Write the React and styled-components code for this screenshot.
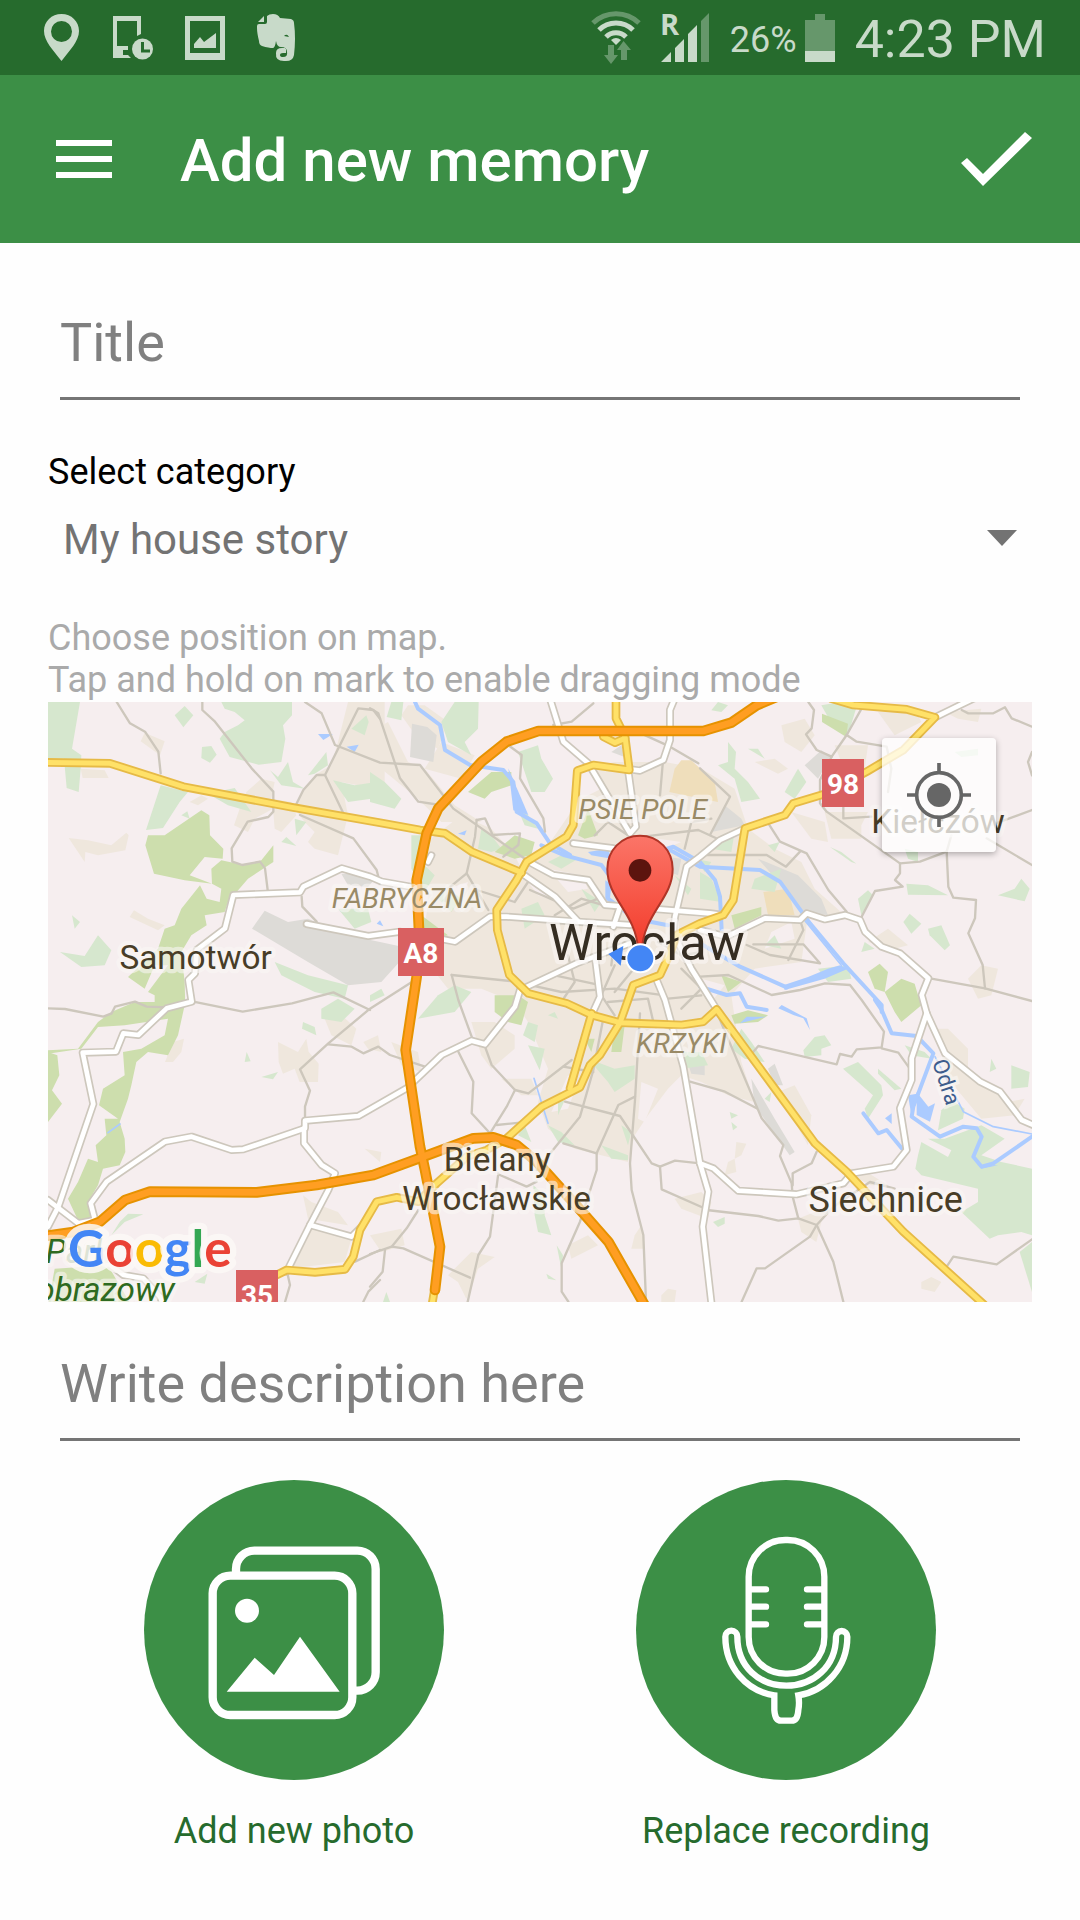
import React, { useState } from "react";
import styled, { createGlobalStyle } from "styled-components";

const GlobalStyle = createGlobalStyle`
  * {
    box-sizing: border-box;
  }
  body {
    margin: 0;
    background: #fefefe;
    font-family: Roboto, "Noto Sans", sans-serif;
  }
`;

const StatusBar = styled.div`
  display: flex;
  justify-content: space-between;
  align-items: center;
  height: 75px;
  padding: 0 34px 0 44px;
  background: #266b2d;
  color: #c8dac9;
`;

const StatusGroup = styled.div`
  display: flex;
  align-items: center;
  gap: ${(props) => props.$gap}px;

  svg {
    display: block;
    overflow: visible;
  }
`;

const Battery = styled.span`
  display: flex;
  align-items: center;
  gap: 8px;
  font-size: 36px;
  line-height: 42px;
`;

const Percent = styled.span`
  padding-top: 4px;
`;

const Clock = styled.span`
  padding-top: 4px;
  font-size: 52px;
  line-height: 64px;
`;

const AppBar = styled.header`
  display: flex;
  align-items: center;
  height: 168px;
  padding: 0 48px 0 56px;
  background: #3c8f46;
  color: #fff;
`;

const AppTitle = styled.h1`
  flex: 1;
  margin: 0 0 0 68px;
  padding-top: 4px;
  font-size: 60px;
  font-weight: 500;
  line-height: 70px;
`;

const IconButton = styled.button`
  display: block;
  padding: 0;
  border: 0;
  background: none;
  color: inherit;
  cursor: pointer;

  svg {
    display: block;
  }
`;

const Form = styled.form`
  display: flex;
  flex-direction: column;
  padding: 67px 48px 48px;
`;

const TextField = styled.input`
  margin: 0 12px;
  padding: 0 0 23px;
  height: 90px;
  border: 0;
  border-bottom: 3px solid #757575;
  border-radius: 0;
  outline: none;
  background: none;
  color: #212121;
  font-family: inherit;
  font-size: 54px;
  line-height: 64px;

  &::placeholder {
    color: #808080;
    opacity: 1;
  }
`;

const Label = styled.label`
  margin-top: 51px;
  color: #000;
  font-size: 36px;
  line-height: 42px;
`;

const SelectBox = styled.div`
  display: grid;
  align-items: center;
  margin: 22px 12px 52px;

  > * {
    grid-area: 1 / 1;
  }

  svg {
    justify-self: end;
    margin: 0 3px 4px 0;
    pointer-events: none;
  }
`;

const Select = styled.select`
  appearance: none;
  width: 100%;
  padding: 0 0 0 3px;
  border: 0;
  background: none;
  color: #737373;
  font-family: inherit;
  font-size: 42px;
  line-height: 50px;
`;

const Hint = styled.p`
  margin: 0 0 1px;
  color: #aaa;
  font-size: 36px;
  line-height: 42px;
`;

const MapBox = styled.div`
  position: relative;
  height: 600px;
  margin-bottom: 49px;
  overflow: hidden;
  background: #f6eeef;
`;

const MapSvg = styled.svg`
  display: block;
  width: 100%;
  height: 100%;
  font-family: Roboto, "Noto Sans", sans-serif;
`;

const LocateButton = styled(IconButton)`
  position: absolute;
  top: 36px;
  right: 36px;
  width: 114px;
  height: 114px;
  border-radius: 4px;
  background: rgba(255, 255, 255, 0.75);
  box-shadow: 0 2px 6px rgba(0, 0, 0, 0.3);
`;

const Actions = styled.div`
  display: grid;
  grid-template-columns: 1fr 1fr;
  margin-top: 39px;
`;

const Action = styled(IconButton)`
  display: flex;
  flex-direction: column;
  align-items: center;
  gap: 30px;
  color: #266b2d;
  font-family: inherit;
  font-size: 36px;
  line-height: 42px;
`;

const Circle = styled.span`
  width: 300px;
  height: 300px;
  border-radius: 50%;
  background: #3c8f46;
`;

/* ---- map data, in map units (3 per pixel) ---- */

const towns = [
  "1136,420 1240,340 1330,380 1400,460 1420,500 1500,430 1590,300 1600,200 1700,180 1850,180 1960,200 2060,260 2100,380 2180,440 2260,480 2300,560 2390,640 2280,640 2260,780 2120,800 2050,880 2080,1080 2120,1200 2040,1180 1960,1140 1900,1120 1860,1160 1800,1240 1760,1300 1740,1380 1660,1360 1580,1340 1500,1280 1470,1200 1500,1100 1440,960 1400,900 1300,860 1200,860 1120,760 1140,600",
  "966,90 1020,60 1080,180 1130,200 1220,310 1300,360 1180,360 1110,290 1000,200",
  "900,0 1010,0 1010,270 960,280 930,250 880,240 900,340 885,400 870,460 800,440 780,420 800,390 770,360 740,320 770,260 800,220 850,190 870,120",
  "1130,10 1200,60 1170,140 1110,110 1060,40 1080,10",
  "1180,120 1280,160 1240,230 1130,200",
  "278,118 290,92 350,118 336,160",
  "98,200 170,205 182,228 104,228",
  "62,408 120,415 190,430 235,392 242,400 232,445 150,460 112,450 110,480",
  "595,270 640,230 680,240 670,290 730,300 745,340 700,390 680,380 675,320 620,350 600,390 558,370 575,320",
  "425,300 460,280 480,290 450,310",
  "245,645 258,625 300,650 350,670 330,685",
  "351,1080 375,1020 408,1010 400,1050 375,1080",
  "690,1020 750,1050 775,1010 782,1050 812,1085 810,1140 755,1140 740,1100 705,1115 692,1080",
  "830,950 870,930 925,980 910,1030 850,1000",
  "946,1020 990,1000 1000,1050 960,1040",
  "765,1480 790,1500 870,1530 900,1570 780,1550",
  "790,1570 910,1610 890,1680 720,1700",
  "950,1340 1000,1350 996,1380",
  "966,1600 1060,1580 1070,1630 1000,1650",
  "1200,1720 1270,1650 1340,1665 1290,1700 1270,1760 1255,1790 1230,1740",
  "1030,1020 1110,1050 1120,1110 1060,1090",
  "1270,960 1340,960 1400,1000 1400,1040 1330,1100 1300,1060",
  "1360,1130 1450,1130 1470,1180 1420,1180",
  "1880,1490 1960,1470 1990,1500 1980,1550 1900,1520",
  "1560,1630 1620,1600 1650,1630 1570,1670",
  "1760,1600 1780,1570 1790,1640 1750,1640",
  "1840,1780 1860,1760 1885,1765 1880,1800 1840,1800",
  "2200,70 2270,50 2300,100 2260,150 2210,120",
  "2360,130 2460,130 2450,200 2400,210 2380,180",
  "2330,330 2460,330 2440,370 2440,410 2350,410",
  "2230,330 2330,360 2340,420 2290,410",
  "2120,180 2180,170 2220,200 2190,215",
  "2460,720 2520,680 2580,730 2540,740",
  "2760,830 2800,790 2850,800 2830,880 2790,890",
  "2660,980 2700,980 2760,1040 2760,1100 2880,1200 2930,1190 2900,1240 2800,1250 2700,1130",
  "2190,1170 2240,1150 2290,1240 2280,1330 2240,1260",
  "2250,1550 2350,1510 2320,1560 2305,1620 2260,1590",
  "2370,1400 2440,1400 2520,1450 2470,1450",
  "2620,1740 2650,1725 2680,1740 2660,1770 2620,1760",
  "2040,1380 2060,1370 2065,1410 2030,1420",
  "2065,1320 2095,1325 2080,1360 2060,1370",
  "2490,30 2600,20 2620,60 2540,100",
  "2690,30 2800,20 2790,60 2730,50",
];

const fields = [
  "1590,210 1640,190 1660,260 1600,290",
  "1500,500 1600,520 1620,560 1560,570",
  "1440,540 1500,560 1500,590 1470,580",
  "1200,560 1260,540 1240,610",
  "1780,1140 1830,1160 1790,1260 1770,1250",
  "1560,1120 1590,1140 1560,1220 1510,1230",
  "2170,690 2230,660 2240,710 2150,740",
  "1960,830 2030,850 1990,900",
  "1830,410 1900,420 1850,440",
];

const woods = [
  "0,0 96,0 72,140 100,160 98,200 92,270 56,258 48,170 0,170",
  "380,40 410,12 436,40 406,76",
  "520,0 732,0 732,40 705,70 712,110 700,180 632,188 545,165 515,110 530,90 570,70 590,55 560,30 530,20",
  "462,135 490,132 506,158 486,182 460,168",
  "338,250 420,270 395,300 345,378 294,384",
  "480,275 560,258 610,330 540,310",
  "666,205 690,225 720,180 735,240 770,260 700,250",
  "780,220 835,150 840,190 800,215",
  "36,750 110,762 150,700 190,745 170,790 100,795",
  "72,640 96,660 80,680",
  "400,340 418,328 425,350",
  "855,235 920,250 985,240 970,290 900,300",
  "740,350 775,360 745,400",
  "700,420 715,405 745,432",
  "910,80 955,40 962,60 950,100",
  "870,620 960,620 970,660 920,680",
  "680,780 780,820 900,850 890,890 800,870 700,820",
  "820,920 870,890 920,920 880,960 820,950",
  "765,960 800,975 805,1000 762,980",
  "590,1080 596,1050 608,1078",
  "640,1125 690,1110 675,1132",
  "215,1560 240,1535 286,1537 230,1560 190,1600",
  "440,1740 478,1715 470,1745",
  "1030,0 1066,0 1060,55 1016,45",
  "1180,60 1220,0 1292,0 1290,80 1250,120 1270,160 1200,120",
  "966,210 1010,240 1060,290 1040,320 966,300",
  "1410,150 1470,130 1480,170 1515,230 1490,270 1450,270",
  "1090,400 1130,400 1120,480 1160,520 1130,570 1090,500",
  "1300,380 1330,400 1360,440 1330,450 1290,440",
  "1400,300 1440,340 1470,380 1430,370",
  "1170,590 1200,560 1240,590 1210,630",
  "1420,620 1470,600 1490,640 1430,680",
  "1170,880 1220,850 1270,870 1220,930 1110,950",
  "966,880 1000,860 1010,880 966,900",
  "1500,480 1560,450 1590,470 1540,500",
  "1600,560 1660,600 1640,630",
  "1880,520 1930,560 1920,580",
  "1940,470 1990,480 1970,510",
  "1800,560 1840,540 1850,590",
  "1440,960 1470,970 1460,1020 1425,1000",
  "1440,1030 1490,1040 1475,1105",
  "1500,940 1520,930 1530,950",
  "1620,1070 1700,1100 1760,1090 1760,1130 1700,1170 1680,1140",
  "1430,1270 1450,1320 1410,1300",
  "1500,1270 1540,1290 1580,1330 1530,1320",
  "1530,1200 1550,1195 1530,1240",
  "1660,1330 1740,1360 1740,1375 1690,1370",
  "1720,1270 1750,1290 1740,1330",
  "1456,1450 1490,1480 1490,1540 1510,1600 1470,1590 1460,1540",
  "1526,1630 1545,1660 1540,1700",
  "1495,1715 1525,1735 1500,1730",
  "1005,1800 1015,1770 1026,1800",
  "1880,1050 1960,1050 1980,1090 1900,1100",
  "2080,980 2110,1020 2150,1080 2090,1070 2050,1040",
  "2010,0 2040,10 2020,30 1990,25",
  "2320,10 2380,0 2430,0 2400,100 2360,80",
  "2040,120 2064,150 2060,200 2100,240 2136,290 2080,300 2060,230 2010,190 2040,180",
  "2100,140 2130,140 2150,170",
  "2210,270 2250,200 2275,240 2240,290",
  "2020,400 2060,390 2050,450 1990,440",
  "2160,430 2195,420 2180,450",
  "2120,530 2200,500 2180,570 2110,560",
  "2346,435 2380,450 2425,485 2410,480",
  "2570,440 2610,450 2610,480 2580,470",
  "2430,590 2460,565 2475,580 2440,640",
  "2575,545 2640,550 2700,580 2580,578",
  "2566,660 2585,635 2620,665 2590,695",
  "2640,680 2680,670 2706,730 2690,745 2645,700",
  "2440,750 2450,720 2480,740",
  "2720,150 2790,140 2790,160 2740,165",
  "2850,580 2900,560 2920,530 2945,560 2930,598",
  "1956,510 1990,530 2020,600 1956,590",
  "2150,730 2180,700 2200,740",
  "2310,800 2400,790 2410,830 2340,840",
  "2266,1045 2300,1005 2330,1000 2350,1030 2320,1040 2320,1060 2270,1065",
  "2385,1100 2430,1080 2500,1150 2505,1180 2460,1250 2450,1220 2475,1180",
  "2490,1100 2560,1160 2540,1165 2490,1115",
  "2570,1030 2630,1050 2650,1070 2590,1060",
  "2680,1225 2710,1195 2750,1220 2745,1250 2670,1285",
  "2610,1360 2620,1320 2700,1365 2710,1345 2640,1310 2690,1310 2800,1270 2870,1310 2800,1360 2860,1380 2952,1400 2952,1600 2920,1590 2850,1600 2825,1610 2740,1530 2790,1500 2790,1460 2620,1420 2602,1400",
  "2890,1090 2945,1110 2940,1155 2890,1160",
  "2830,1070 2845,1100 2825,1110",
  "2915,1650 2952,1620 2952,1770",
  "1995,1560 2030,1545 2030,1565 2010,1575",
  "2045,1230 2070,1240 2050,1250",
  "2050,1260 2068,1275 2055,1285",
  "2150,1190 2170,1170 2165,1200",
];

const parks = [
  "292,430 300,400 350,400 460,325 484,340 486,400 526,440 524,470 470,465 425,520 492,545 410,535 318,515",
  "492,545 490,500 520,475 590,490 640,475 676,430 676,480 600,530 540,600 530,630 470,640 476,670 430,700 400,750 410,840 412,916 320,916 320,880 300,870 360,790 320,790 290,860 240,825 330,740 350,680 380,670 400,620 456,550 476,590 515,600 520,560",
  "190,930 260,900 340,900 410,910 390,1000 360,1060 300,1050 265,1080 250,1150 240,1190 215,1260 230,1310 232,1350 215,1390 165,1400 150,1450 120,1500 130,1550 90,1555 60,1490 90,1440 120,1370 150,1380 143,1330 175,1300 170,1250 210,1250 153,1210 165,1160 230,1120 225,1050 280,1040 350,1000 360,950 230,970 150,975 100,1040 0,1055 0,1045 90,1040 150,960",
  "0,1050 28,1060 34,1120 12,1165 42,1205 0,1260",
  "20,1700 180,1690 250,1810 0,1810",
  "1260,270 1330,210 1390,210 1390,250 1330,270 1310,290",
  "1340,450 1400,400 1460,420 1450,460 1400,470",
  "1590,400 1620,320 1650,400 1610,410",
  "1120,640 1200,700 1150,710 1120,690",
  "1340,880 1410,880 1440,900 1420,970 1380,960 1340,930",
  "1700,970 1730,970 1720,1050 1690,1050",
  "1610,1010 1640,1010 1630,1050",
  "2322,35 2400,65 2395,105 2322,60",
  "2050,640 2140,615 2140,640 2060,680",
  "2460,810 2495,785 2520,810 2510,870 2480,860",
  "2510,870 2560,830 2600,845 2610,880 2620,910 2560,960 2540,930",
  "2050,940 2100,925 2160,940 2130,960 2060,965",
  "2020,820 2080,840 2040,870",
];

const greys = [
  "1092,65 1138,75 1166,100 1156,180 1086,165",
  "612,680 650,626 720,660 780,650 900,700 996,720 1090,740 1000,840 900,850 780,780",
  "966,720 1050,740 1050,780 966,820",
  "880,515 990,520 960,555 900,550",
  "2130,470 2250,520 2320,590 2340,640 2260,630 2200,550",
  "2270,190 2320,145 2350,165 2310,230",
  "2030,310 2080,350 2090,370 1990,390",
  "2110,1130 2180,1250 2240,1350 2225,1360 2120,1210",
  "2160,1100 2180,1085 2205,1150 2180,1150",
  "1820,460 1900,470 1890,520 1840,500",
  "1920,1085 1970,1070 1970,1120 1930,1115",
  "1690,150 1720,130 1730,165",
];

const sands = [
  "1864,270 1880,200 1900,175 1930,175 2000,240 2010,300 1960,290",
  "2146,570 2220,560 2240,640 2160,640",
];

const lakes = [
  "1381,199 1396,234 1441,339 1396,325",
  "2606,1170 2641,1214 2661,1204 2646,1259 2606,1239",
  "2511,1249 2531,1234 2531,1266",
  "2191,919 2201,909 2276,949 2286,984 2266,949 2236,939",
  "2076,964 2156,944 2096,944",
  "2206,850 2280,825 2340,800 2376,790 2400,800 2330,830 2210,864",
  "810,96 855,96 826,114",
  "896,134 932,128 920,150",
  "1230,395 1256,385 1250,400",
  "986,665 996,655 1006,673",
  "1620,450 1680,440 1690,470 1630,460",
  "1672,535 1692,550 1672,600",
  "2580,1180 2616,1174 2590,1240",
  "2776,1360 2790,1390 2850,1390 2800,1400",
];

const rivers = [
  "1101,0 1110,20 1176,69 1191,144 1266,189 1366,204 1396,240 1406,329 1466,364 1506,424 1566,459",
  "1480,430 1550,460 1660,489 1686,524 1680,590 1760,650 1860,670",
  "1846,444 1876,434 1956,480 2001,534 2016,584 2021,684",
  "1866,444 1956,494 2136,504 2196,539 2286,664 2386,784 2501,909 2501,930",
  "1956,724 2076,794 2216,856",
  "1956,854 2036,879 2076,874 2096,914 2156,924",
  "2481,894 2501,924 2531,994 2606,1002 2656,1054 2596,1214 2591,1244 2676,1304 2746,1274 2786,1279 2801,1304 2776,1364 2801,1394 2836,1384 2952,1304",
  "2446,1234 2491,1294 2516,1284 2561,1339",
];

const streams = ["2661,1064 2746,1229 2836,1274 2952,1296", "1458,1129 1480,1200 1500,1264", "180,1292 216,1266", "2266,650 2380,790"];

const lanes = [
  "206,0 246,64 291,89 331,149 338,214",
  "463,0 463,24 501,59 611,199 676,269 676,329 661,345 599,359 551,439 553,479 583,489 636,479 651,499 659,564",
  "771,0 821,34 861,129 996,182 1116,189 1216,320 1436,474",
  "996,50 976,24 931,19 831,219 806,219 766,264 741,314",
  "831,219 886,334",
  "756,339 916,409 986,504 991,524",
  "761,584 763,614 806,659",
  "0,919 51,921 166,944 191,934 201,914 261,899 296,914 361,916",
  "436,899 584,929 732,904 856,871 966,924",
  "1101,834 966,920 841,1024 756,1102 786,1166 771,1214 771,1256",
  "841,1027 911,1034 946,1054 991,1034 1026,1059 1131,1094",
  "716,1704 726,1749 711,1800",
  "996,1644 921,1679",
  "996,1734 961,1769 946,1799",
  "1111,1524 1076,1579 1031,1634 966,1656",
  "1031,1634 1066,1639 1266,1727",
  "1011,1644 1004,1709 966,1754",
  "1351,1414 1326,1604 1291,1659 1259,1799",
  "1356,1419 1436,1454 1466,1439",
  "1211,819 1231,894 1271,1004",
  "1211,819 1406,839",
  "1231,1049 1276,1139 1271,1234 1326,1294",
  "1311,1034 1331,1089 1401,1164 1376,1214 1326,1294",
  "1401,1164 1441,1174 1571,1074",
  "1346,1269 1416,1262",
  "1666,949 1636,1104 1596,1244 1466,1404",
  "1546,1094 1636,1110",
  "1551,1199 1716,1242 1811,1384 1836,1394 1881,1376 1956,1384",
  "1836,1394 1841,1462 1981,1524",
  "1761,1184 1711,1209 1646,1354 1646,1404 1596,1559 1541,1684 1541,1769 1561,1799",
  "1546,1324 1646,1354",
  "1776,934 1761,1194 1746,1384 1751,1464 1786,1599 1794,1799",
  "1926,1139 2031,1169 2126,1219",
  "2006,930 2046,1024 2141,1249 2206,1329 2196,1362 2231,1444 2234,1484 2251,1549",
  "1976,1524 2131,1542 2191,1556 2251,1549 2306,1569 2356,1679 2386,1799",
  "2306,1569 2286,1604 2151,1699 2126,1699 2081,1799",
  "2306,1569 2356,1514 2466,1440 2540,1460",
  "2306,1349 2291,1384 2234,1414 2234,1450",
  "2116,1049 2131,1032 2366,1087 2376,1056 2411,1064 2426,1042 2501,1036 2508,989 2441,894 2406,849 2331,844 2256,864 2171,879 2041,819 1956,824",
  "2501,1039 2551,1052 2581,1094",
  "2696,1694 2716,1664 2846,1687 2952,1612",
  "2281,0 2298,24 2291,79 2274,97 2306,144 2351,164 2396,99 2441,19",
  "2396,99 2426,119 2516,134 2530,200 2520,270",
  "2741,24 2761,34 2836,34 2871,16 2891,49 2952,74",
  "2351,164 2316,234 2316,304 2336,329 2556,484 2616,479 2696,449 2710,400",
  "2386,304 2386,349 2470,344",
  "2696,449 2701,554 2716,587 2784,594 2781,649 2761,694 2804,789 2811,859",
  "2646,829 2811,859 2952,897",
  "2556,484 2556,514 2541,534 2564,554 2481,567 2441,644",
  "2161,364 2196,419 2276,454 2341,564 2396,629",
  "1976,459 2156,459 2214,494 2256,449",
  "1956,199 2046,284 1986,399",
  "2816,409 2952,489",
  "2816,374 2952,324",
  "2952,150 2940,180 2952,220",
  "2096,729 2166,759 2316,784 2266,727 2116,727",
  "2256,654 2266,684 2221,774",
  "966,19 991,34 1056,229 1111,299 1176,309",
  "1366,119 1421,159 1416,229 1486,349 1491,389",
  "1516,69 1571,59 1636,4",
  "1746,79 1866,134 1951,184",
  "1846,164 1836,280",
  "1286,354 1311,349 1334,399 1416,394 1411,429 1366,464",
  "1286,354 1281,404 1256,514 1321,624",
  "1256,514 1200,560 1190,620",
  "1786,404 1951,384 2016,414",
  "1286,564 1400,600 1440,540",
  "1446,564 1576,620 1650,590",
  "1520,640 1600,590 1700,620",
  "1450,850 1540,870 1700,860 1850,880",
  "1520,820 1660,850",
  "1560,760 1580,840 1540,900",
  "1700,790 1660,880 1700,940",
  "1766,790 1700,870",
  "1700,700 1690,790",
  "1680,900 1800,890 1816,960",
  "1830,720 1900,760 1960,750",
  "1900,800 1960,860 1900,920",
  "1860,890 1960,880",
  "1640,400 1680,360 1740,400",
  "1910,440 1930,360 1990,350",
];

const streets = [
  "1086,554 1001,539 966,524 881,499 766,554 756,571 556,579 531,679 446,744 441,814 421,834 431,899 356,919 271,999 226,994 204,1049 104,1052 136,1206 31,1514 0,1574",
  "776,666 961,702 1056,689",
  "1150,460 1140,480",
  "1150,705 1221,719 1326,644 1376,644 1586,659 1746,669",
  "0,1494 91,1564 141,1554 128,1504 176,1439 351,1319 431,1304 551,1344 586,1342 771,1279 771,1256 931,1242 1076,1159 1181,1059 1271,1016 1311,1027 1401,914 1416,864 1586,784 1746,724",
  "768,1279 768,1324 821,1389 861,1414 841,1464 786,1569 716,1709",
  "786,1569 911,1604 941,1574",
  "181,1684 226,1719 286,1729 336,1784 346,1810",
  "1506,-10 1546,119 1621,184 1746,394 1764,374 1741,209",
  "1880,-10 1866,24 1866,114 1846,174 1776,206 1746,202",
  "1421,514 1521,584 1591,659",
  "1451,484 1516,519 1621,534 1671,609 1986,634 2026,639",
  "1576,424 1696,439",
  "2091,379 2016,414 1956,464 1916,494 1881,644 1876,694 1930,800 2006,922",
  "1956,684 2036,704 2151,649 2256,654 2276,634 2331,652 2391,639 2436,654 2451,689 2501,734 2556,754 2641,829 2621,879 2636,934 2691,1054 2796,1139 2856,1169 2921,1254 2962,1272",
  "2636,934 2591,1069 2591,1134 2556,1219 2576,1344 2536,1394 2411,1414 2386,1444 2246,1477 2071,1466 1996,1399 1956,1384",
  "1826,834 1851,894 1906,1094 1956,1384 1981,1469 1964,1574 1991,1810",
  "1641,764 1656,884 1631,939",
  "1716,614 1696,674",
  "2661,46 2706,24 2776,-10",
];

const mainRoads = [
  "-10,181 186,184 406,254 732,316 996,362 1116,384 1191,394 1271,449 1421,512",
  "1704,-10 1704,49 1731,104 1744,204 1636,189 1588,206 1576,369 1556,404 1436,479 1406,534 1346,624 1348,684 1384,819 1441,874 1556,904 1631,939 1716,962 1901,969 1966,959 2006,922 2301,1324 2396,1409 2566,1589 2816,1815",
  "1666,104 1701,122 1731,109",
  "2350,-10 2416,9 2576,22 2661,46 2566,144 2456,209 2336,274 2236,304 2211,339 2091,379 2056,594 2026,639 1956,664 1886,699 1866,754 1836,819 1756,849 1716,962 1656,1059 1626,1089 1596,1156 1481,1214 1376,1309 1316,1344 1256,1364 1166,1444 1111,1499 1046,1486 986,1499 936,1584 916,1664 891,1702 801,1711 716,1704 676,1724",
  "1631,934 1566,1159",
  "1161,1754 1151,1814",
];

const motorways = [
  "2220,-30 2126,10 2050,62 1966,87 1471,87 1376,119 1301,179 1171,319 1136,394 1106,534 1113,684 1106,824 1073,1044 1116,1334 1131,1404 1176,1634 1161,1764",
  "-10,1602 76,1590 156,1559 231,1494 306,1469 626,1471 806,1449 976,1419 1126,1364 1276,1309 1336,1306 1406,1329 1466,1379 1606,1534 1681,1619 1796,1820",
];

const areas = [
  { fill: "#efe7dd", shapes: towns },
  { fill: "#f6eeef", shapes: fields },
  { fill: "#efdebb", shapes: sands },
  { fill: "#dddbd7", shapes: greys },
  { fill: "#d6e7ce", shapes: woods },
  { fill: "#cddead", shapes: parks },
  { fill: "#abcbff", shapes: lakes },
];

const lines = [
  { stroke: "#abcbff", width: 12, paths: rivers },
  { stroke: "#abcbff", width: 5, paths: streams },
  { stroke: "#cdc7bc", width: 7, paths: lanes },
  { stroke: "#cdc7bc", width: 24, paths: streets },
  { stroke: "#fff", width: 14, paths: streets },
  { stroke: "#e6ba46", width: 26, paths: mainRoads },
  { stroke: "#ffe168", width: 15, paths: mainRoads },
  { stroke: "#e69200", width: 32, paths: motorways },
  { stroke: "#ff9e22", width: 20, paths: motorways },
];

const labels = [
  { text: "PSIE POLE", x: 1784, y: 350, size: 84, fill: "#998a66", italic: true },
  { text: "FABRYCZNA", x: 1077, y: 618, size: 84, fill: "#998a66", italic: true },
  { text: "KRZYKI", x: 1900, y: 1052, size: 84, fill: "#998a66", italic: true },
  { text: "Samotwór", x: 443, y: 800, size: 100, fill: "#483d27" },
  { text: "Wrocław", x: 1797, y: 773, size: 152, fill: "#352d22" },
  { text: "Kiełczów", x: 2670, y: 392, size: 100, fill: "#483d27" },
  { text: "Bielany", x: 1348, y: 1408, size: 100, fill: "#483d27" },
  { text: "Wrocławskie", x: 1346, y: 1524, size: 100, fill: "#483d27" },
  { text: "Siechnice", x: 2513, y: 1530, size: 108, fill: "#483d27" },
  { text: "Park", x: 90, y: 1684, size: 100, fill: "#2e6a20", italic: true },
  { text: "obrazowy", x: 172, y: 1797, size: 100, fill: "#2e6a20", italic: true },
];

const shields = [
  { text: "98", x: 2322, y: 171, width: 126 },
  { text: "A8", x: 1050, y: 678, width: 138 },
  { text: "35", x: 564, y: 1704, width: 126 },
];

const CityMap = () => (
  <MapSvg viewBox="0 0 2952 1800" preserveAspectRatio="xMidYMid slice" role="img" aria-label="Map of Wrocław">
    <defs>
      <linearGradient id="pin" x1="0" y1="0" x2="0" y2="1">
        <stop offset="0" stopColor="#fb7568" />
        <stop offset="1" stopColor="#f33b2a" />
      </linearGradient>
    </defs>
    {areas.map((area) => (
      <g key={area.fill} fill={area.fill}>
        {area.shapes.map((points) => (
          <polygon key={points} points={points} />
        ))}
      </g>
    ))}
    {lines.map((line) => (
      <g
        key={line.stroke + line.width}
        fill="none"
        stroke={line.stroke}
        strokeWidth={line.width}
        strokeLinejoin="round"
        strokeLinecap="round"
      >
        {line.paths.map((points) => (
          <polyline key={points} points={points} />
        ))}
      </g>
    ))}
    {labels.map((label) => (
      <text
        key={label.text}
        x={label.x}
        y={label.y}
        fontSize={label.size}
        fontStyle={label.italic ? "italic" : "normal"}
        textAnchor="middle"
        fill={label.fill}
        stroke="#faf7f5"
        strokeOpacity="0.6"
        strokeWidth="26"
        strokeLinejoin="round"
        paintOrder="stroke"
      >
        {label.text}
      </text>
    ))}
    <text
      transform="translate(2652 1080) rotate(72)"
      fontSize="66"
      fill="#3d5c8c"
      stroke="#faf7f5"
      strokeOpacity="0.6"
      strokeWidth="20"
      paintOrder="stroke"
    >
      Odra
    </text>
    {shields.map((s) => (
      <g key={s.text}>
        <rect x={s.x} y={s.y} width={s.width} height="144" fill="#d96061" />
        <text x={s.x + s.width / 2} y={s.y + 106} fontSize="84" fontWeight="700" textAnchor="middle" fill="#fff">
          {s.text}
        </text>
      </g>
    ))}
    {/* dropped pin and current position */}
    <path
      d="M1776 401c56 0 98 44 98 100 0 90-85 130-93 244h-10c-8-114-93-154-93-244 0-56 42-100 98-100z"
      fill="url(#pin)"
      stroke="#b03527"
      strokeWidth="6"
    />
    <circle cx="1776" cy="505" r="34" fill="#5c140e" />
    <path d="M1681 756l45-24-8 59z" fill="#4386f5" />
    <circle cx="1777" cy="769" r="42" fill="#4386f5" stroke="#fff" strokeWidth="6" />
    <text
      x="60"
      y="1696"
      fontFamily="Lato, sans-serif"
      fontSize="154"
      fontWeight="700"
      stroke="#fbf8f6"
      strokeOpacity="0.85"
      strokeWidth="38"
      strokeLinejoin="round"
      paintOrder="stroke"
    >
      <tspan fill="#4386f5">G</tspan>
      <tspan fill="#ea4235">o</tspan>
      <tspan fill="#fabb05">o</tspan>
      <tspan fill="#4386f5">g</tspan>
      <tspan fill="#34a753">l</tspan>
      <tspan fill="#ea4235">e</tspan>
    </text>
  </MapSvg>
);

const PlaceIcon = () => (
  <svg width="35" height="47" viewBox="0 0 35 47">
    <path
      fill="currentColor"
      fillRule="evenodd"
      d="M17.5 0C7.5 0 0 7.5 0 17c0 10 9 19 17.5 30C26 36 35 27 35 17 35 7.5 27.5 0 17.5 0zm0 7a10.5 10.5 0 1 1 0 21 10.5 10.5 0 0 1 0-21z"
    />
  </svg>
);

const DeviceClockIcon = () => (
  <svg width="42" height="44" viewBox="-2 0 42 44" fill="currentColor">
    <path d="M0 0h28v18l-4 2V5H4v25h11v4h-5v5h5l3 3H0z" />
    <circle cx="29.5" cy="33" r="10.5" />
    <path d="M29.5 26v9H37" fill="none" stroke="#266b2d" strokeWidth="3" />
  </svg>
);

const PictureIcon = () => (
  <svg width="40" height="44" viewBox="0 0 40 44" fill="currentColor">
    <path fillRule="evenodd" d="M0 0h40v44H0zM5 5v32h30V5z" />
    <path d="M9 32v-4l6-7 4 5 12-9v15z" />
  </svg>
);

const ElephantIcon = () => (
  <svg width="38" height="47" viewBox="0 0 38 47" fill="currentColor">
    <path d="M1 8l6-6v6z" />
    <path
      fillRule="evenodd"
      d="M0 12q0-2 2-2h6q2 0 2-2V2q2-2 6-2 5 0 7 4l11 1q3 1 3 4 2 15 0 32-1 6-8 6-11 1-10-8 0-5 6-5h4v5h-3q-3 0-3 2t3 2q5 0 4-5 0-5-6-5-4 0-5-6-1 7-3 7-4 0-11-2-3-1-3-5-2-8-2-13zM27 22q3-3 5 1z"
    />
  </svg>
);

const WifiIcon = () => (
  <svg width="50" height="53" viewBox="0 0 50 53" fill="none" stroke="currentColor" strokeWidth="5">
    <path d="M2 12a33 33 0 0 1 46 0" opacity="0.4" />
    <path d="M8 19a24 24 0 0 1 34 0M15 26a14 14 0 0 1 20 0" />
    <path d="M20 29a8 8 0 0 1 10 0l-5 5z" fill="currentColor" stroke="none" />
    <path
      d="M17 34h6v10h4l-7 9-7-9h4zM32.5 30l7.5 9h-4v10h-6V39h-4z"
      fill="currentColor"
      stroke="none"
      opacity="0.4"
    />
  </svg>
);

const SignalIcon = () => (
  <svg width="49" height="49" viewBox="0 0 49 49" fill="currentColor">
    <text x="-1" y="22" fontFamily="Open Sans, sans-serif" fontSize="29" fontWeight="700">
      R
    </text>
    <path d="M0 49l10-10v10zM14 35l9-9v23h-9zM27 21l9-9v37h-9z" />
    <path d="M40 8l8-8v49h-8z" opacity="0.4" />
  </svg>
);

const BatteryIcon = () => (
  <svg width="30" height="48" viewBox="0 0 30 48" fill="currentColor">
    <path d="M10 0h10v6h10v31H0V6h10z" opacity="0.4" />
    <path d="M0 37h30v11H0z" />
  </svg>
);

const PhotosIcon = () => (
  <svg viewBox="0 0 900 900" width="300" height="300" fill="none" stroke="#fff" strokeWidth="25">
    <path d="M276 276v-9a55 55 0 0 1 55-55H640a55 55 0 0 1 55 55V577a55 55 0 0 1-55 55h-5" />
    <rect x="206" y="287" width="419" height="418" rx="53" />
    <circle cx="309" cy="392" r="36" fill="#fff" stroke="none" />
    <path d="M248 635l84-102 58 52 78-115 119 165z" fill="#fff" stroke="none" />
  </svg>
);

const MicIcon = () => (
  <svg
    viewBox="0 0 900 900"
    width="300"
    height="300"
    fill="none"
    stroke="#fff"
    strokeWidth="19"
    strokeLinecap="round"
  >
    <rect x="338" y="180" width="227" height="401" rx="110" />
    <path d="M340 328h50M340 380h50M340 433h50M563 328h-50M563 380h-50M563 433h-50" />
    <path d="M268 470a18 18 0 0 1 36 0C304 560 370 617 451 617S600 560 600 470a17 17 0 0 1 34 0C634 560 570 633 487 646q4 22 0 44-2 32-20 32h-32q-18 0-20-32v-44C330 633 268 560 268 470z" />
  </svg>
);

const App = () => {
  const [title, setTitle] = useState("");
  const [category, setCategory] = useState("My house story");
  const [description, setDescription] = useState("");

  const saveMemory = (e) => {
    e.preventDefault();
  };

  return (
    <div>
      <GlobalStyle />
      <StatusBar>
        <StatusGroup $gap={32}>
          <PlaceIcon />
          <DeviceClockIcon />
          <PictureIcon />
          <ElephantIcon />
        </StatusGroup>
        <StatusGroup $gap={20}>
          <WifiIcon />
          <SignalIcon />
          <Battery>
            <Percent>26%</Percent>
            <BatteryIcon />
          </Battery>
          <Clock>4:23 PM</Clock>
        </StatusGroup>
      </StatusBar>

      <AppBar>
        <IconButton type="button" aria-label="Menu">
          <svg width="56" height="38" viewBox="0 0 56 38" fill="currentColor">
            <path d="M0 0h56v6H0zM0 16h56v6H0zM0 32h56v6H0z" />
          </svg>
        </IconButton>
        <AppTitle>Add new memory</AppTitle>
        <IconButton type="submit" form="memory" aria-label="Save">
          <svg width="71" height="54" viewBox="0 0 71 54" fill="currentColor">
            <path d="M0 31l6-5 16 16L64 0l7 6-49 48z" />
          </svg>
        </IconButton>
      </AppBar>

      <Form id="memory" onSubmit={saveMemory}>
        <TextField
          type="text"
          aria-label="Title"
          placeholder="Title"
          value={title}
          onChange={(e) => setTitle(e.target.value)}
        />

        <Label htmlFor="category">Select category</Label>
        <SelectBox>
          <Select id="category" value={category} onChange={(e) => setCategory(e.target.value)}>
            <option>My house story</option>
          </Select>
          <svg width="30" height="16" viewBox="0 0 30 16">
            <path d="M0 0h30L15 16z" fill="#737373" />
          </svg>
        </SelectBox>

        <Hint>
          Choose position on map.
          <br />
          Tap and hold on mark to enable dragging mode
        </Hint>
        <MapBox>
          <CityMap />
          <LocateButton type="button" aria-label="My location">
            <svg viewBox="0 0 342 342" width="114" height="114" fill="none" stroke="#666" strokeWidth="11">
              <circle cx="171" cy="171" r="67" />
              <circle cx="171" cy="171" r="36" fill="#666" stroke="none" />
              <path d="M75 171h28M239 171h28M171 75v28M171 239v28" />
            </svg>
          </LocateButton>
        </MapBox>

        <TextField
          type="text"
          aria-label="Description"
          placeholder="Write description here"
          value={description}
          onChange={(e) => setDescription(e.target.value)}
        />

        <Actions>
          <Action type="button">
            <Circle>
              <PhotosIcon />
            </Circle>
            Add new photo
          </Action>
          <Action type="button">
            <Circle>
              <MicIcon />
            </Circle>
            Replace recording
          </Action>
        </Actions>
      </Form>
    </div>
  );
};

export default App;
